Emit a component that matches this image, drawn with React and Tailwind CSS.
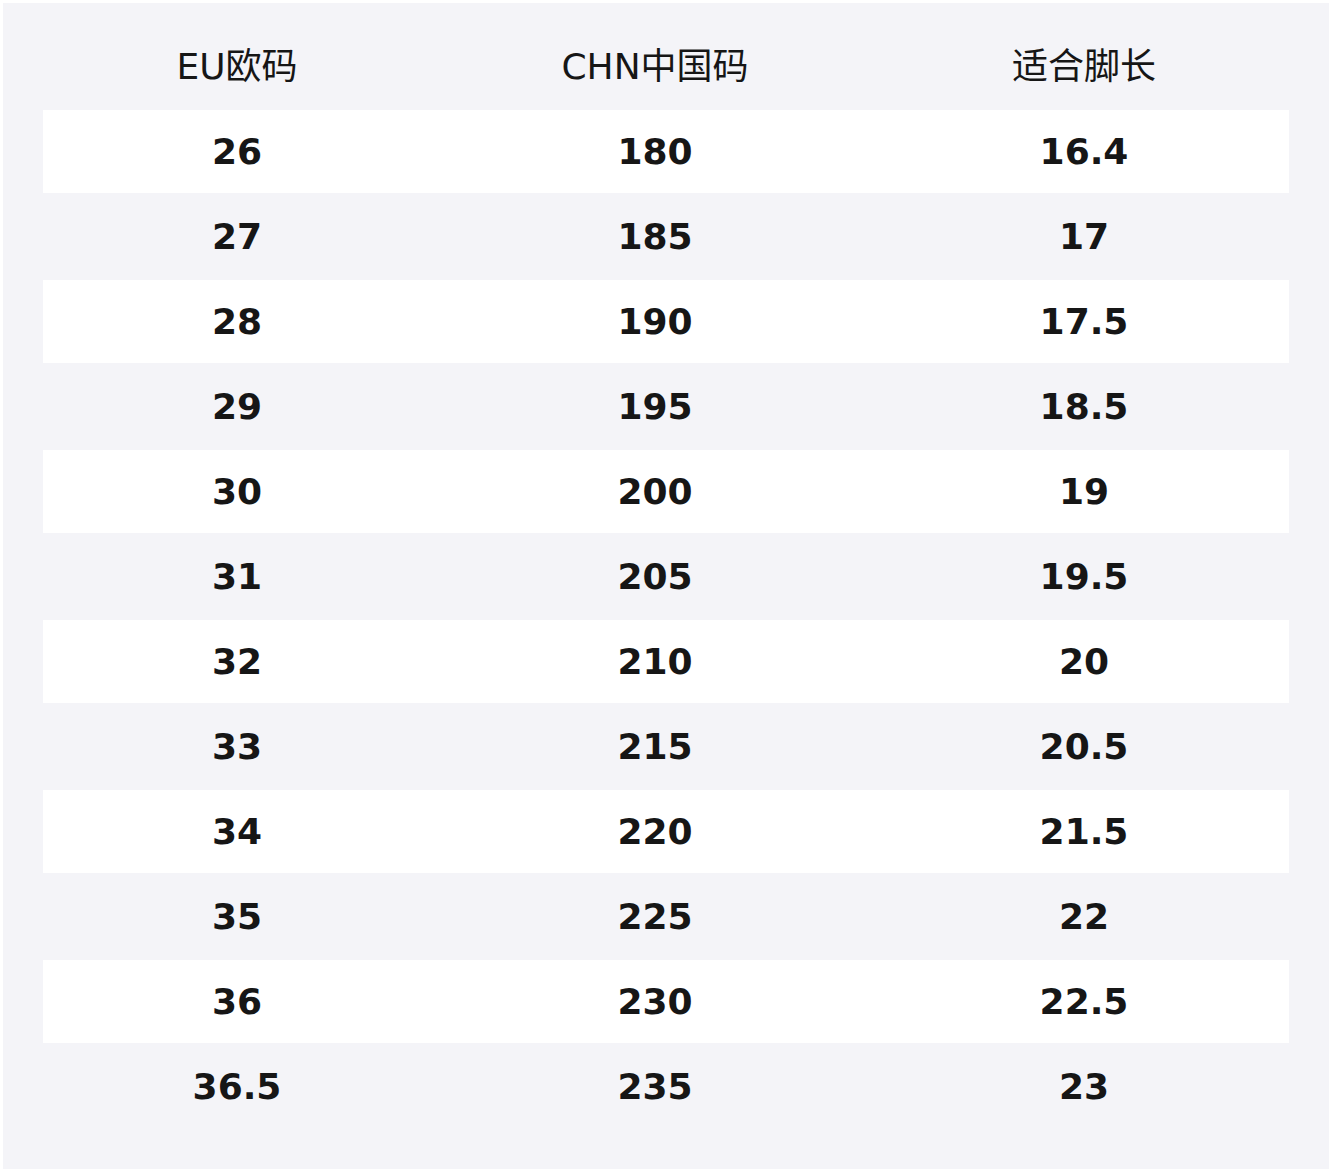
import React from 'react';

const rows = [
    ['26', '180', '16.4'],
    ['27', '185', '17'],
    ['28', '190', '17.5'],
    ['29', '195', '18.5'],
    ['30', '200', '19'],
    ['31', '205', '19.5'],
    ['32', '210', '20'],
    ['33', '215', '20.5'],
    ['34', '220', '21.5'],
    ['35', '225', '22'],
    ['36', '230', '22.5'],
    ['36.5', '235', '23'],
];

const font = { fontFamily: '"DejaVu Sans", "Noto Sans CJK SC", sans-serif' };

const App = () => {
    return (
        <div className="w-[1332px] h-[1173px] bg-white p-[3px]" style={font}>
            <div className="h-[1166px] bg-[#f4f4f8] pt-[22px] px-[40px]">
                <div className="flex flex-col gap-[2px] text-[36px] text-[#161616]">
                    <div className="grid grid-cols-[388px_448px_410px] h-[83px] items-center text-center">
                        <div>EU欧码</div>
                        <div>CHN中国码</div>
                        <div>适合脚长</div>
                    </div>
                    {rows.map((row, i) => (
                        <div
                            key={row[0]}
                            className={
                                'grid grid-cols-[388px_448px_410px] h-[83px] items-center text-center font-bold ' +
                                (i % 2 === 0 ? 'bg-white' : 'bg-[#f4f4f8]')
                            }
                        >
                            {row.map((cell, j) => (
                                <div key={j}>{cell}</div>
                            ))}
                        </div>
                    ))}
                </div>
            </div>
        </div>
    );
};

export default App;
